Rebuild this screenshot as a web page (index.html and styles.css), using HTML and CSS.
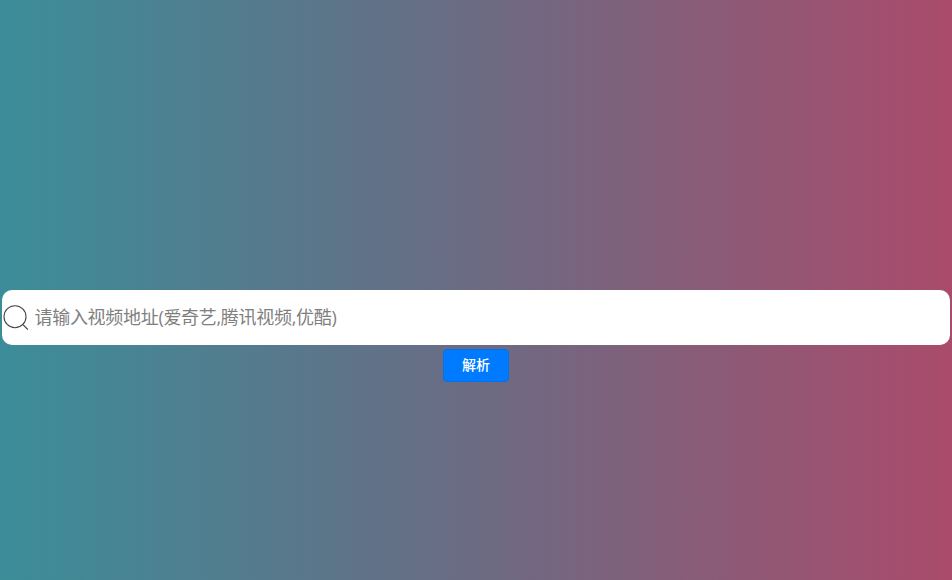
FILE: index.html
```html
<!DOCTYPE html>
<html lang="zh-CN">
<head>
<meta charset="utf-8">
<title>视频解析</title>
<link rel="stylesheet" href="styles.css">
</head>
<body>
<main class="page">
  <label class="search">
    <svg class="search-icon" viewBox="0 0 28 28" aria-hidden="true"><circle cx="13" cy="12.7" r="11"/><path d="M20.5 20.2l5.3 5.3"/></svg>
    <input class="search-input" type="text" placeholder="请输入视频地址(爱奇艺,腾讯视频,优酷)">
  </label>
  <button class="submit" type="button">解析</button>
</main>
</body>
</html>
```

FILE: styles.css
```css
* { box-sizing: border-box; }
body { margin: 0; }
.page {
  height: 580px;
  padding: 290px 2px 0;
  display: flex;
  flex-direction: column;
  align-items: center;
  gap: 4px;
  background: linear-gradient(to right, #3b8d99, #6b6b83, #aa4b6b);
}
.search {
  display: flex;
  align-items: center;
  width: 100%;
  height: 55px;
  background: #fff;
  border-radius: 10px;
}
.search-icon {
  width: 28px;
  height: 28px;
  flex: none;
  fill: none;
  stroke: #444;
  stroke-width: 1.1;
}
.search-input {
  flex: 1;
  min-width: 0;
  height: 100%;
  margin: 0;
  padding: 0 5px 1px 4.5px;
  border: 0;
  outline: 0;
  background: none;
  font: 18px "Open Sans", "Noto Sans CJK SC", sans-serif;
  letter-spacing: -0.3px;
}
.search-input::placeholder { color: #7f7f7f; }
.submit {
  width: 66px;
  height: 33px;
  padding: 0 0 3px;
  border: 1px solid #0073ee;
  border-radius: 4px;
  background: #007bff;
  color: #fff;
  font: 500 14px "Noto Sans CJK SC", sans-serif;
}
```
